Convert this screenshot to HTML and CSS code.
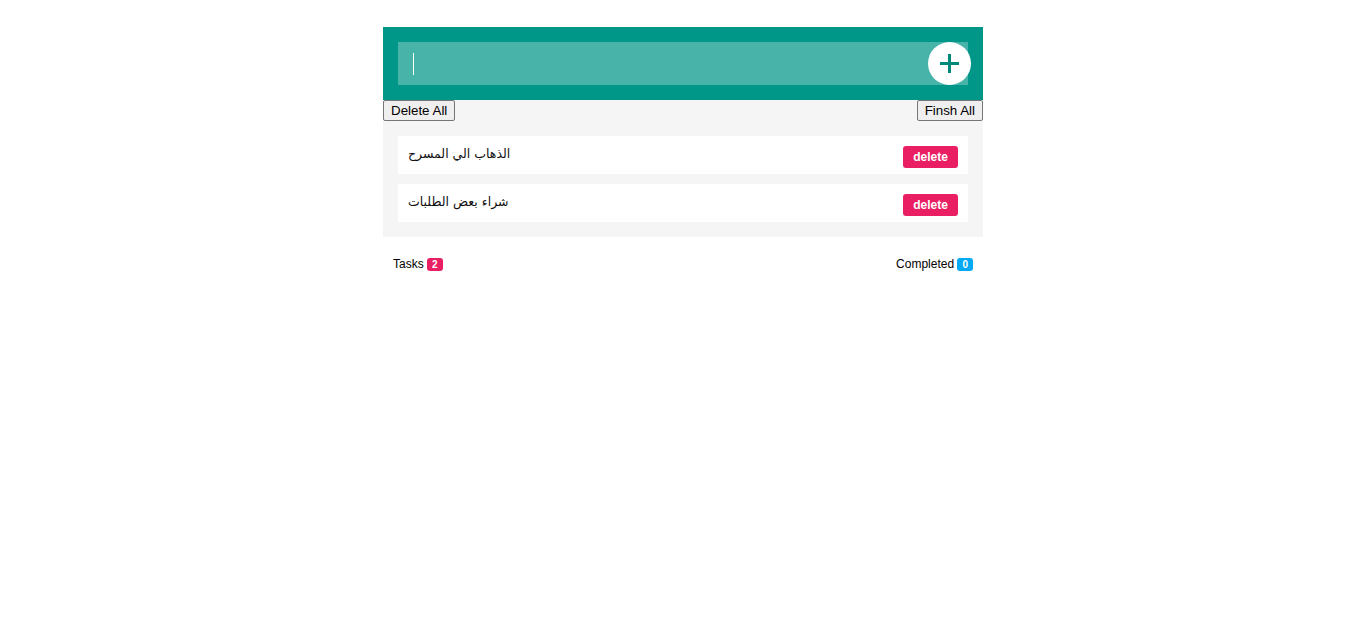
FILE: index.html
```html
<!DOCTYPE html>
<html lang="en">
<head>
<meta charset="utf-8">
<title>Todo</title>
<link rel="stylesheet" href="styles.css">
</head>
<body>
<div class="app">
  <div class="header">
    <div class="input-wrap">
      <input class="task-input" type="text" autofocus>
      <span class="caret"></span>
      <span class="add-btn">
        <svg width="19" height="19" viewBox="0 0 19 19"><path d="M9.5 0v19M0 9.5h19" stroke="#00897b" stroke-width="3" fill="none"/></svg>
      </span>
    </div>
  </div>
  <div class="body">
    <div class="actions">
      <button class="native-btn">Delete All</button>
      <button class="native-btn">Finsh All</button>
    </div>
    <div class="list">
      <div class="item"><span class="item-text">الذهاب الي المسرح</span><span class="del">delete</span></div>
      <div class="item"><span class="item-text">شراء بعض الطلبات</span><span class="del">delete</span></div>
    </div>
  </div>
  <div class="footer">
    <span class="stat">Tasks <span class="badge pink">2</span></span>
    <span class="stat">Completed <span class="badge blue">0</span></span>
  </div>
</div>
</body>
</html>
```
FILE: styles.css
```css
html, body { margin: 0; padding: 0; background: #fff; }
body { font-family: "Liberation Sans", Arial, "DejaVu Sans", sans-serif; color: #000; }
.app { width: 600px; margin: 27px auto 0; }
.header { background: #009688; padding: 15px; }
.input-wrap { position: relative; height: 43px; }
.task-input {
  box-sizing: border-box; width: 100%; height: 43px; border: 0; outline: none;
  background: rgba(255,255,255,0.28); padding: 0 15px; color: #fff; caret-color: #fff;
  font-size: 16px; font-family: "Liberation Sans", sans-serif;
}
.caret { position: absolute; left: 15px; top: 11px; width: 1px; height: 22px; background: #fff; }
.add-btn {
  position: absolute; right: -3px; top: 0; width: 43px; height: 43px; border-radius: 50%;
  background: #fff; display: flex; align-items: center; justify-content: center;
}
.body { background: #f5f5f5; }
.actions { display: flex; justify-content: space-between; }
.native-btn {
  font-family: "Liberation Sans", Arial, sans-serif; font-size: 13.333px; height: 21px;
  padding: 1px 7px; margin: 0; background: #efefef; border: 1px solid #767676; border-radius: 2px; color: #000;
}
.list { padding: 15px; display: flex; flex-direction: column; gap: 10px; }
.item { background: #fff; padding: 10px; display: flex; justify-content: space-between; align-items: flex-start; height: 18px; }
.item-text { font-size: 12.5px; line-height: 16px; font-family: "DejaVu Sans", sans-serif; color: #111; }
.del {
  background: #e91e63; color: #fff; font-weight: bold; font-size: 12px; line-height: 14px;
  padding: 4px 10px; border-radius: 3px; width: 35px; text-align: center;
}
.footer { display: flex; justify-content: space-between; padding: 20px 10px 0; font-size: 12px; line-height: 14px; }
.badge { display: inline-block; color: #fff; font-weight: bold; font-size: 10px; line-height: 13px; padding: 0 5px; border-radius: 3px; vertical-align: 0; }
.pink { background: #e91e63; }
.blue { background: #03a9f4; }
```
